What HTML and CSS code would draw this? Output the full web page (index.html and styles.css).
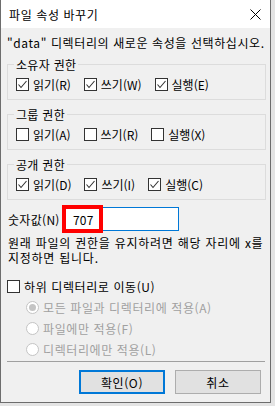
FILE: index.html
```html
<!DOCTYPE html>
<html lang="ko">
<head>
  <meta charset="UTF-8">
  <title>파일 속성 바꾸기</title>
  <link rel="stylesheet" href="styles.css">
</head>
<body>
  <div class="window">
    <div class="titlebar">
      <span class="title">파일 속성 바꾸기</span>
      <svg class="close" width="11" height="11" viewBox="0 0 11 11">
        <path d="M0.5 0.5 L10.5 10.5 M10.5 0.5 L0.5 10.5" stroke="#000" stroke-width="1" fill="none"/>
      </svg>
    </div>

    <div class="content">
      <p class="prompt">"data" 디렉터리의 새로운 속성을 선택하십시오.</p>

      <fieldset class="group">
        <legend>소유자 권한</legend>
        <div class="row">
          <label class="check"><span class="box on"></span>읽기(R)</label>
          <label class="check"><span class="box on"></span>쓰기(W)</label>
          <label class="check"><span class="box on"></span>실행(E)</label>
        </div>
      </fieldset>

      <fieldset class="group">
        <legend>그룹 권한</legend>
        <div class="row">
          <label class="check"><span class="box"></span>읽기(A)</label>
          <label class="check"><span class="box"></span>쓰기(R)</label>
          <label class="check"><span class="box"></span>실행(X)</label>
        </div>
      </fieldset>

      <fieldset class="group">
        <legend>공개 권한</legend>
        <div class="row">
          <label class="check"><span class="box on"></span>읽기(D)</label>
          <label class="check"><span class="box on"></span>쓰기(I)</label>
          <label class="check"><span class="box on"></span>실행(C)</label>
        </div>
      </fieldset>

      <div class="num-row">
        <span class="num-label">숫자값(N)</span>
        <div class="num-input"><span class="mark">707</span></div>
      </div>

      <p class="hint">원래 파일의 권한을 유지하려면 해당 자리에 x를<br>지정하면 됩니다.</p>

      <label class="check sub"><span class="box"></span>하위 디렉터리로 이동(U)</label>

      <div class="radios">
        <label class="radio"><span class="dot sel"></span>모든 파일과 디렉터리에 적용(A)</label>
        <label class="radio"><span class="dot"></span>파일에만 적용(F)</label>
        <label class="radio"><span class="dot"></span>디렉터리에만 적용(L)</label>
      </div>

      <div class="sep"></div>

      <div class="buttons">
        <button class="btn default">확인(O)</button>
        <button class="btn">취소</button>
      </div>
    </div>
  </div>
</body>
</html>
```

FILE: styles.css
```css
body {
  margin: 0;
  background-color: #e4e4e4;
  font-family: "Noto Sans CJK KR", "Noto Sans", sans-serif;
  font-size: 12px;
  letter-spacing: 0.6px;
  color: #000;
}
.window {
  width: 271px;
  height: 403px;
  box-sizing: border-box;
  background-color: #f0f0f0;
  border-left: 1px solid #6d6d6d;
  border-right: 1px solid #6d6d6d;
  border-bottom: 1px solid #6d6d6d;
}
.titlebar {
  height: 28px;
  background-color: #fff;
  display: flex;
  align-items: center;
  justify-content: space-between;
  padding: 0 9px 0 8px;
}
.title {
  line-height: 15px;
}
.content {
  padding: 0 4px 0 6px;
}
.prompt {
  margin: 7px 0 0;
  line-height: 15px;
  white-space: nowrap;
}
.group {
  margin: 7px 0 0;
  padding: 6px 8px 8px;
  border: 1px solid #dcdcdc;
  letter-spacing: 0;
}
.group legend {
  padding: 0 2px;
  margin-left: -2px;
  line-height: 15px;
  letter-spacing: 0.3px;
}
.row {
  display: flex;
  gap: 13px;
}
.check {
  display: flex;
  align-items: center;
  gap: 4px;
  line-height: 13px;
}
.box {
  width: 13px;
  height: 13px;
  box-sizing: border-box;
  border: 1px solid #333;
  background-color: #fff;
  flex: none;
}
.box.on {
  background: #fff url("data:image/svg+xml;utf8,<svg xmlns='http://www.w3.org/2000/svg' width='11' height='11'><path d='M1.5 5.5 L4 8.5 L9.5 2' stroke='%23333' stroke-width='1.1' fill='none'/></svg>") no-repeat center;
}
.num-row {
  display: flex;
  align-items: center;
  gap: 5px;
  margin-top: 7px;
  padding-left: 1px;
}
.num-label {
  width: 52px;
  line-height: 15px;
  letter-spacing: 0.3px;
  white-space: nowrap;
}
.num-input {
  width: 114px;
  height: 24px;
  box-sizing: border-box;
  border: 1px solid #0078d7;
  background-color: #fff;
  display: flex;
  align-items: center;
}
.mark {
  width: 41px;
  height: 28px;
  box-sizing: border-box;
  margin-left: -4px;
  border: 4px solid #ff0000;
  padding-left: 7px;
  display: flex;
  align-items: center;
  flex: none;
  letter-spacing: 0.2px;
}
.hint {
  margin: 4px 0 0;
  padding-left: 1px;
  line-height: 15px;
  white-space: nowrap;
  letter-spacing: 0.75px;
}
.sub {
  margin-top: 15px;
}
.radios {
  padding-left: 19px;
  margin-top: 8px;
  display: flex;
  flex-direction: column;
  gap: 8px;
}
.radio {
  display: flex;
  align-items: center;
  gap: 4px;
  line-height: 13px;
  color: #a0a0a0;
}
.dot {
  width: 13px;
  height: 13px;
  box-sizing: border-box;
  border: 1px solid #c4c4c4;
  border-radius: 50%;
  background-color: #fff;
  flex: none;
  display: flex;
  align-items: center;
  justify-content: center;
}
.dot.sel::after {
  content: "";
  width: 7px;
  height: 7px;
  border-radius: 50%;
  background-color: #c4c4c4;
}
.sep {
  margin: 5px 1px 0 0;
  height: 1px;
  background-color: #a0a0a0;
}
.buttons {
  display: flex;
  justify-content: flex-end;
  gap: 10px;
  margin-top: 8px;
  padding-right: 5px;
}
.btn {
  width: 86px;
  height: 24px;
  box-sizing: border-box;
  background-color: #e1e1e1;
  border: 1px solid #adadad;
  font-family: inherit;
  font-size: 12px;
  letter-spacing: inherit;
  color: #000;
  padding: 0;
}
.btn.default {
  border: 2px solid #0078d7;
}
```
